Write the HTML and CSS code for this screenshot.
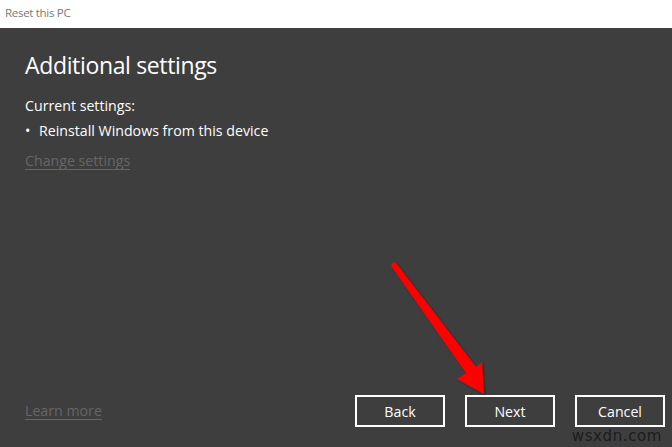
FILE: index.html
```html
<!DOCTYPE html>
<html lang="en">
<head>
<meta charset="utf-8">
<title>Reset this PC</title>
<link rel="stylesheet" href="styles.css">
</head>
<body>
<div class="window">
  <div class="titlebar">Reset this PC</div>
  <div class="content">
    <h1 class="heading">Additional settings</h1>
    <p class="label">Current settings:</p>
    <ul class="list">
      <li>Reinstall Windows from this device</li>
    </ul>
    <a class="link change" href="#">Change settings</a>
  </div>
  <div class="footer">
    <a class="link" href="#">Learn more</a>
    <div class="buttons">
      <button class="btn">Back</button>
      <button class="btn">Next</button>
      <button class="btn">Cancel</button>
    </div>
  </div>
  <div class="watermark">wsxdn.com</div>
  <svg class="arrow" width="672" height="447" viewBox="0 0 672 447">
    <defs>
      <filter id="sh" x="-20%" y="-20%" width="140%" height="140%">
        <feDropShadow dx="1" dy="1" stdDeviation="1.2" flood-color="#000" flood-opacity="0.45"/>
      </filter>
    </defs>
    <polygon filter="url(#sh)" fill="#ff0000" points="391,266 466,373 457,379 484,394 482,362 476,367 396,263 393,262"/>
  </svg>
</div>
</body>
</html>
```
FILE: styles.css
```css
html, body {
  margin: 0;
  padding: 0;
}
body {
  font-family: "Open Sans", "Noto Sans", sans-serif;
  background: #3e3e3e;
}
.window {
  position: relative;
  width: 672px;
  height: 447px;
  display: flex;
  flex-direction: column;
  background: #3e3e3e;
  overflow: hidden;
}
.titlebar {
  height: 28px;
  flex: none;
  background: #ffffff;
  color: #7a7a7a;
  font-size: 11.5px;
  letter-spacing: -0.3px;
  line-height: 26px;
  padding-left: 5px;
}
.content {
  flex: 1;
  padding: 0 25px;
  color: #ffffff;
}
.heading {
  margin: 22px 0 0;
  font-weight: 400;
  font-size: 23px;
  letter-spacing: -0.35px;
  line-height: 30px;
}
.label {
  margin: 16px 0 0;
  font-size: 14.2px;
  line-height: 20px;
}
.list {
  margin: 5px 0 0;
  padding: 0;
  list-style: none;
  font-size: 14.2px;
  line-height: 20px;
}
.list li::before {
  content: "\2022";
  display: inline-block;
  width: 14px;
}
.link {
  color: #666666;
  font-size: 14.2px;
  line-height: 20px;
  text-decoration: underline;
  text-underline-offset: 3px;
}
.change {
  display: inline-block;
  margin-top: 10px;
}
.footer {
  flex: none;
  display: flex;
  align-items: center;
  padding: 0 7px 20px 25px;
}
.buttons {
  margin-left: auto;
  display: flex;
  gap: 20px;
}
.btn {
  width: 90px;
  height: 32px;
  box-sizing: border-box;
  border: 2px solid #ffffff;
  background: #3e3e3e;
  color: #ffffff;
  font-family: "Open Sans", "Noto Sans", sans-serif;
  font-size: 14.2px;
  padding: 0;
}
.watermark {
  position: absolute;
  right: 10px;
  top: 428px;
  color: #1c1c1c;
  font-family: "DejaVu Sans", sans-serif;
  font-size: 15px;
  line-height: 17px;
  letter-spacing: 0.6px;
}
.arrow {
  position: absolute;
  left: 0;
  top: 0;
  pointer-events: none;
}
```
